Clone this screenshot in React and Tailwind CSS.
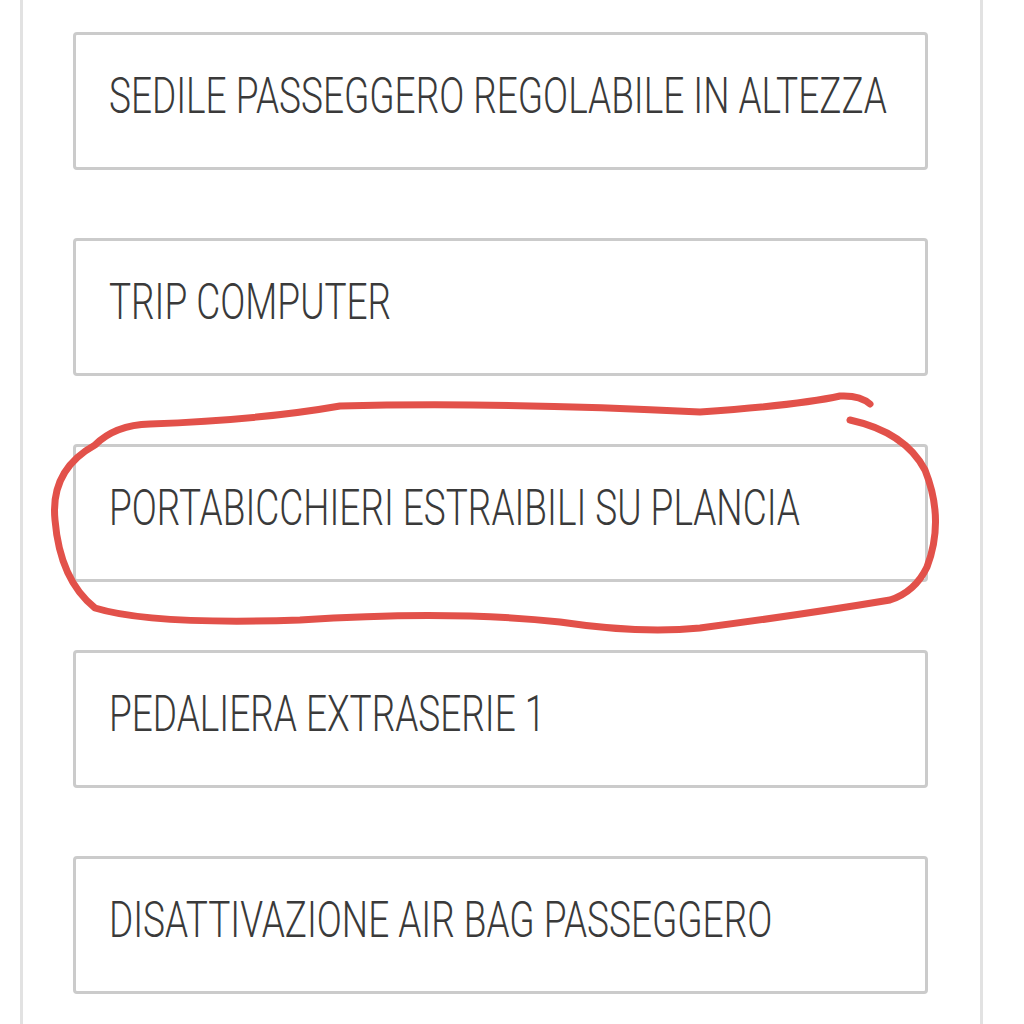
import React from "react";

const items = [
  "SEDILE PASSEGGERO REGOLABILE IN ALTEZZA",
  "TRIP COMPUTER",
  "PORTABICCHIERI ESTRAIBILI SU PLANCIA",
  "PEDALIERA EXTRASERIE 1",
  "DISATTIVAZIONE AIR BAG PASSEGGERO",
];

export default function App() {
  return (
    <div className="relative h-[1024px] w-[1024px] overflow-hidden bg-white font-['Roboto',sans-serif]">
      <div className="ml-[20px] h-full w-[963px] border-x-[3px] border-[#e2e2e2] pl-[50px] pt-[32px]">
        <div className="flex flex-col gap-[68px]">
          {items.map((label) => (
            <div
              key={label}
              className="flex h-[138px] w-[855px] items-center rounded-[4px] border-[3px] border-[#cbcbcb] pb-[10px] pl-[33px]"
            >
              <span className="inline-block origin-left scale-x-[0.74] whitespace-nowrap text-[50px] font-light leading-none text-[#3a3a3a]">
                {label}
              </span>
            </div>
          ))}
        </div>
      </div>

      {/* hand-drawn highlight */}
      <svg
        className="pointer-events-none absolute left-0 top-0"
        width="1024"
        height="1024"
        viewBox="0 0 1024 1024"
        fill="none"
      >
        <path
          d="M850 420 Q905 432 925 470 Q945 520 927 567 Q915 592 890 600 Q800 615 700 628 Q640 634 560 622 Q450 610 300 620 Q150 625 95 608 Q60 580 55 520 Q50 470 95 445 Q115 425 150 424 Q260 420 340 406 Q500 402 700 412 Q800 405 840 396 Q860 395 870 404"
          stroke="#e2514a"
          strokeWidth="7"
          strokeLinecap="round"
          strokeLinejoin="round"
        />
      </svg>
    </div>
  );
}
